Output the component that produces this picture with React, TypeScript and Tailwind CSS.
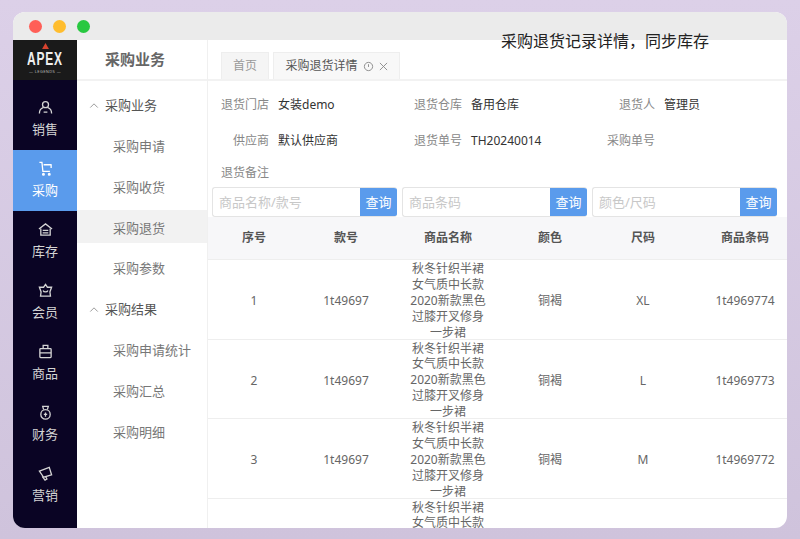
import { ReactNode } from 'react';

const font = "font-['Noto_Sans','Noto_Sans_CJK_SC',sans-serif]";

const icons: Record<string, ReactNode> = {
  sales: (
    <>
      <circle cx="8" cy="5" r="3.2" />
      <path d="M1.5 14.5c0-3.6 1.8-5.6 4-6.3M14.5 14.5c0-3.6-1.8-5.6-4-6.3" />
      <path d="M6 13h4" />
    </>
  ),
  cart: (
    <>
      <path d="M1.5 1.5h2.7l1 9.5h7.5" />
      <path d="M6 4h8.5M14 4v3.5" />
      <circle cx="5.8" cy="14" r="0.9" />
      <circle cx="12" cy="14" r="0.9" />
    </>
  ),
  stock: (
    <>
      <path d="M1 7.5 8 2l7 5.5" />
      <path d="M3 7v7h10V7" />
      <path d="M5 9h6M5 11.5h6" />
    </>
  ),
  member: (
    <>
      <path d="M8 1.5 10 4.5h4.5l-1.8 5 .6 4.5H2.7l.6-4.5-1.8-5H6z" />
      <path d="M5.5 8c.6 2 4.4 2 5 0" />
    </>
  ),
  goods: (
    <>
      <rect x="2" y="5" width="12" height="9.5" rx="0.8" />
      <path d="M5.5 5V1.5h5V5M2 9.5h12" />
    </>
  ),
  finance: (
    <>
      <path d="M6 5 5 1.5h6L10 5" />
      <circle cx="8" cy="10" r="5" />
      <path d="M8 8v4.5M6.2 10h3.6" />
    </>
  ),
  market: (
    <>
      <path d="M1.5 5.5 12 1.5l2.5 8-8.5 2.5z" />
      <path d="M4.5 11 7.5 15l2-1.2-1.3-2.3" />
    </>
  ),
};

function NavIcon({ name }: { name: string }) {
  return (
    <svg viewBox="0 0 16 16" fill="none" stroke="currentColor" strokeWidth="1.4" className="h-[15px] w-[15px]">
      {icons[name]}
    </svg>
  );
}

const nav = [
  { key: 'sales', label: '销售' },
  { key: 'cart', label: '采购', active: true },
  { key: 'stock', label: '库存' },
  { key: 'member', label: '会员' },
  { key: 'goods', label: '商品' },
  { key: 'finance', label: '财务' },
  { key: 'market', label: '营销' },
];

function Group({ label }: { label: string }) {
  return (
    <div className="flex h-[40.8px] items-center pl-[12px] text-[13px] text-[#555]">
      <svg viewBox="0 0 10 6" fill="none" stroke="#888" strokeWidth="1" className="mr-[6px] h-[5px] w-[10px]">
        <path d="M0.5 5.5 5 1l4.5 4.5" />
      </svg>
      {label}
    </div>
  );
}

function Item({ label, active }: { label: string; active?: boolean }) {
  return (
    <div className="h-[40.8px] pt-[3px] text-[13px] text-[#777]">
      <div className={`flex h-[33px] items-center pl-[36px] pt-[3px] ${active ? 'bg-[#f2f2f2]' : ''}`}>{label}</div>
    </div>
  );
}

function Field({ label, value }: { label: string; value?: string }) {
  return (
    <div className="flex items-center gap-[9px]">
      <span className="w-[61px] text-right text-[#888]">{label}</span>
      <span className="text-[#333]">{value}</span>
    </div>
  );
}

function Search({ placeholder }: { placeholder: string }) {
  return (
    <div className="flex h-[30px] w-[185px] overflow-hidden rounded-[3px] border border-[#e4e4e4] border-r-0">
      <div className="flex flex-1 items-center pl-[6px] pt-[1px] text-[13px] text-[#c8c8c8]">{placeholder}</div>
      <button className="w-[37px] bg-[#5a9bec] pt-[1px] text-[13px] text-white">查询</button>
    </div>
  );
}

const grid = 'grid grid-cols-[92px_92px_112px_92px_94px_110px] text-center';

const rows = [
  { no: '1', size: 'XL', code: '1t4969774', name: ['秋冬针织半裙', '女气质中长款', '2020新款黑色', '过膝开叉修身', '一步裙'] },
  { no: '2', size: 'L', code: '1t4969773', name: ['秋冬针织半裙', '女气质中长款', '2020新款黑色', '过膝开叉修身', '一步裙'] },
  { no: '3', size: 'M', code: '1t4969772', name: ['秋冬针织半裙', '女气质中长款', '2020新款黑色', '过膝开叉修身', '一步裙'] },
  { no: '', size: '', code: '', name: ['秋冬针织半裙', '女气质中长款'] },
];

export default function App() {
  return (
    <div className={`h-[539px] w-[800px] overflow-hidden bg-gradient-to-b from-[#dcd0e8] to-[#cfc3dc] pl-[13px] pt-[12px] ${font}`}>
      <div className="relative flex h-[516px] w-[774px] flex-col overflow-hidden rounded-[12px] bg-white">
        <div className="flex h-[28px] shrink-0 items-center gap-[11px] bg-[#ebebeb] pl-[16px]">
          <span className="h-[13px] w-[13px] rounded-full bg-[#ff5f57]" />
          <span className="h-[13px] w-[13px] rounded-full bg-[#ffbd2e]" />
          <span className="h-[13px] w-[13px] rounded-full bg-[#28c840]" />
        </div>
        <div className="absolute left-[488px] top-[18px] text-[16px] leading-[22px] text-[#222]">采购退货记录详情，同步库存</div>

        <div className="flex min-h-0 flex-1">
          <div className="w-[64px] shrink-0 bg-[#0a0424]">
            <div className="flex h-[40px] flex-col items-center overflow-hidden bg-[#1a1a1a] text-[#eee]">
              <svg viewBox="0 0 8 7" className="mt-[3px] h-[6px] w-[7px]">
                <path d="M4 0 8 7H0z" fill="#d8432f" />
              </svg>
              <div className="mt-[3px] scale-y-[1.5] font-['Liberation_Sans',sans-serif] text-[12px] font-bold leading-[14px] tracking-[0.8px]">APEX</div>
              <div className="mt-[3px] text-[4px] leading-[5px] tracking-[0.4px] text-[#bbb]">— LEGENDS —</div>
            </div>
            <div className="mt-[9px]">
              {nav.map(n => (
                <div
                  key={n.key}
                  className={`flex h-[61px] flex-col items-center pt-[11px] text-[13px] leading-[20px] ${n.active ? 'bg-[#5a9bec] text-white' : 'text-[#d4d4d4]'}`}
                >
                  <NavIcon name={n.key} />
                  <span className="mt-[4px]">{n.label}</span>
                </div>
              ))}
            </div>
          </div>

          <div className="w-[131px] shrink-0 border-r border-[#f0f0f0]">
            <div className="flex h-[41px] items-center border-b-2 border-[#f2f2f2] pl-[28px] text-[15px] font-bold text-[#666]">采购业务</div>
            <div className="pt-[4px]">
              <Group label="采购业务" />
              <Item label="采购申请" />
              <Item label="采购收货" />
              <Item label="采购退货" active />
              <Item label="采购参数" />
              <Group label="采购结果" />
              <Item label="采购申请统计" />
              <Item label="采购汇总" />
              <Item label="采购明细" />
            </div>
          </div>

          <div className="min-w-0 flex-1 overflow-hidden text-[12px]">
            <div className="flex h-[41px] items-end gap-[4px] border-b-2 border-[#f2f2f2] pl-[13px]">
              <div className="flex h-[27px] w-[48px] items-center justify-center border border-b-0 border-[#eee] bg-[#f5f5f5] text-[#999]">首页</div>
              <div className="flex h-[27px] w-[127px] items-center justify-center gap-[5px] border border-b-0 border-[#eee] bg-[#f8f8f8] text-[#555]">
                采购退货详情
                <svg viewBox="0 0 12 12" fill="none" stroke="#888" strokeWidth="1" className="h-[11px] w-[11px]">
                  <circle cx="6" cy="6" r="4.5" />
                  <path d="M6 3.5v3" />
                </svg>
                <svg viewBox="0 0 10 10" fill="none" stroke="#888" strokeWidth="1" className="h-[9px] w-[9px]">
                  <path d="M1 1l8 8M9 1l-8 8" />
                </svg>
              </div>
            </div>

            <div className="grid grid-cols-[193px_193px_193px] gap-y-[18px] pt-[15px] leading-[18px]">
              <Field label="退货门店" value="女装demo" />
              <Field label="退货仓库" value="备用仓库" />
              <Field label="退货人" value="管理员" />
              <Field label="供应商" value="默认供应商" />
              <Field label="退货单号" value="TH20240014" />
              <Field label="采购单号" />
            </div>
            <div className="pl-[13px] pt-[14px] leading-[18px] text-[#888]">退货备注</div>

            <div className="flex gap-[5px] pl-[4px] pt-[5px]">
              <Search placeholder="商品名称/款号" />
              <Search placeholder="商品条码" />
              <Search placeholder="颜色/尺码" />
            </div>

            <div className={`${grid} h-[43px] items-center border-b border-[#eee] bg-[#f7f7f9] font-bold text-[#555]`}>
              {['序号', '款号', '商品名称', '颜色', '尺码', '商品条码'].map(h => (
                <div key={h}>{h}</div>
              ))}
            </div>
            {rows.map((r, i) => (
              <div key={i} className={`${grid} h-[79.5px] items-start border-b border-[#eee] text-[#666]`}>
                <div className="leading-[81px]">{r.no}</div>
                <div className="leading-[81px]">{r.no && '1t49697'}</div>
                <div className="px-[16px] pt-[1px] leading-[15.9px]">
                  {r.name.map((line, j) => (
                    <div key={j}>{line}</div>
                  ))}
                </div>
                <div className="leading-[81px]">{r.no && '铜褐'}</div>
                <div className="leading-[81px]">{r.size}</div>
                <div className="leading-[81px]">{r.code}</div>
              </div>
            ))}
          </div>
        </div>
      </div>
    </div>
  );
}
